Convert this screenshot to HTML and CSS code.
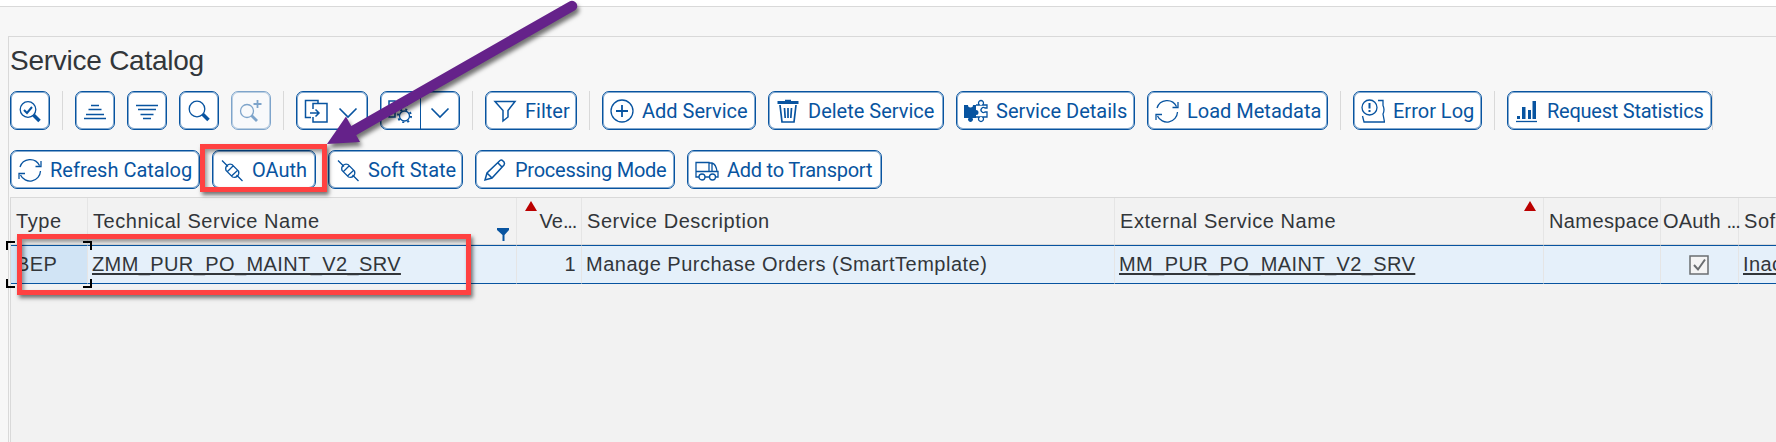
FILE: index.html
```html
<!DOCTYPE html>
<html lang="en">
<head>
<meta charset="utf-8">
<title>Service Catalog</title>
<link rel="stylesheet" href="styles.css">
</head>
<body>
<div class="topbar"></div>
<main class="panel">
  <h1 class="title"><span>Service Catalog</span></h1>
  <div class="toolbar">
    <button class="btn w40"><svg class="icon" viewBox="0 0 24 24"><circle cx="10" cy="10.500" r="7.800"/><path d="M6 11l3 3 5-6" stroke-width="2"/><path class="thick" d="M15.500 16l6 6"/></svg></button>
    <i class="sep"></i>
    <button class="btn w40"><svg class="icon" viewBox="0 0 24 24"><path d="M8 6.500h8M5.500 10.500h13M3 15.500h18M1 19.500h22"/></svg></button>
    <button class="btn w40"><svg class="icon" viewBox="0 0 24 24"><path d="M1 6.500h22M3 10.500h18M5.500 15.500h13M8 19.500h8"/></svg></button>
    <button class="btn w40"><svg class="icon" viewBox="0 0 24 24"><circle cx="10" cy="10" r="7.800"/><path class="thick" d="M15.500 15l6 6"/></svg></button>
    <button class="btn w40 off"><svg class="icon" viewBox="0 0 24 24"><circle cx="8" cy="12" r="6.500"/><path d="M12.500 16.500l5.500 5.500" stroke-width="2.800"/><path d="M18.500 1v8M14.500 5h8" stroke-width="1.800"/></svg></button>
    <i class="sep"></i>
    <button class="btn w72"><svg class="icon" viewBox="0 0 24 24"><path d="M7 18.500H1.500V1.500H14V4M9 10V4.500H23V23H9V18M6 14h9M11.500 10.500l3.500 3.500-3.500 3.500" stroke-width="1.500"/></svg><svg class="chev" viewBox="0 0 20 12"><path d="M1.500 1.500L10 10l8.500-8.500"/></svg></button>
    <div class="btn split"><span class="half"><svg class="icon" viewBox="0 0 24 24"><path d="M1 18V2h6v16zM10 7V2h9v5" stroke-width="1.500"/><circle cx="16.500" cy="17" r="5"/><circle cx="16.500" cy="17" r="6.500" stroke-width="2" stroke-dasharray="2 3.105"/></svg></span><span class="half last"><svg class="chev" viewBox="0 0 20 12"><path d="M1.500 1.500L10 10l8.500-8.500"/></svg></span></div>
    <i class="sep"></i>
    <button class="btn w92"><svg class="icon" viewBox="0 0 24 24"><path d="M2 2.500h20l-7 9v6.500l-5 4V11.500z" stroke-width="1.500"/></svg><span class="label">Filter</span></button>
    <i class="sep"></i>
    <button class="btn w154"><svg class="icon" viewBox="0 0 24 24"><circle cx="12" cy="12" r="11"/><path d="M12 6v12M6 12h12" stroke-width="1.800"/></svg><span class="label">Add Service</span></button>
    <button class="btn w176"><svg class="icon" viewBox="0 0 24 24"><path d="M1.500 3.500h21" stroke-width="3"/><path d="M9 1.500h6" stroke-width="1.500"/><path d="M4 6l2 17h12l2-17M8.500 9l.7 10M12 9v10M15.500 9l-.7 10" stroke-width="1.700"/></svg><span class="label">Delete Service</span></button>
    <button class="btn w179"><svg class="icon" viewBox="0 0 24 24"><path class="solid" d="M0 6h4a2.500 2.500 0 1 0 5 0h3v5a2.500 2.500 0 1 1 0 5v3H8.500a2.500 2.500 0 1 1-4 0H0z"/><path d="M12 6h3.500a2.500 2.500 0 1 1 3 0H23v3h-2a2.500 2.500 0 1 0 0 4h2v5h-4.500a2.500 2.500 0 1 1-3 0H12"/></svg><span class="label">Service Details</span></button>
    <button class="btn w181"><svg class="icon" viewBox="0 0 24 24"><path d="M2 9A10.500 10.500 0 0 1 21.500 7.500M23 3v5.500h-5.500M22.500 13A10.500 10.500 0 0 1 2.500 17M1 21v-5.500h6"/></svg><span class="label">Load Metadata</span></button>
    <i class="sep"></i>
    <button class="btn w129"><svg class="icon" viewBox="0 0 24 24"><circle cx="8.500" cy="8.500" r="7.500"/><path d="M8.500 4v5.500M8.500 11v2" stroke-width="2"/><path d="M17 1.500h5v5q2 4 0 8.500l1.500 8H3L1.500 17"/></svg><span class="label">Error Log</span></button>
    <i class="sep"></i>
    <button class="btn w205"><svg class="icon" viewBox="0 0 24 24"><path class="solid" d="M2 17h3v3H2zM7 8h3.500v12H7zM13 11h3v9h-3zM17.500 2H21v18h-3.500z"/><path d="M1 22.500h21"/></svg><span class="label narrow">Request Statistics</span></button>
    <i class="sep tail"></i>
  </div>
  <div class="toolbar second">
    <button class="btn w190"><svg class="icon" viewBox="0 0 24 24"><path d="M2 9A10.500 10.500 0 0 1 21.500 7.500M23 3v5.500h-5.500M22.500 13A10.500 10.500 0 0 1 2.500 17M1 21v-5.500h6"/></svg><span class="label">Refresh Catalog</span></button>
    <button class="btn w104"><svg class="icon" viewBox="0 0 24 24"><path d="M2 2.500l6 6M16.500 17l6 6"/><path d="M12 6.500q-3-1-5 1t-1 5l6.500 6.500q3 1 5-1t1-5zM7 14l6.500-6.500M11.500 18L18 12"/></svg><span class="label">OAuth</span></button>
    <button class="btn w135"><svg class="icon" viewBox="0 0 24 24"><path d="M2 2.500l6 6M16.500 17l6 6"/><path d="M12 6.500q-3-1-5 1t-1 5l6.500 6.500q3 1 5-1t1-5zM7 14l6.500-6.500M11.500 18L18 12"/></svg><span class="label">Soft State</span></button>
    <button class="btn w200"><svg class="icon" viewBox="0 0 24 24"><path d="M2 22l2-7L17 2.500q1.500-1 3 .5l1 1q1 1.500 0 3L9 20zM15 5l4.500 4.500M4 15l5 5" stroke-width="1.500"/></svg><span class="label narrow">Processing Mode</span></button>
    <button class="btn w195"><svg class="icon" viewBox="0 0 24 24"><path d="M4 19H1V4.500h13v9M1 13.500h22V19h-2M14 5h3q4 1 5 8.500M17 5v8M10 19h4"/><circle cx="7" cy="19" r="3"/><circle cx="17.500" cy="19" r="3"/></svg><span class="label narrow">Add to Transport</span></button>
  </div>
  <section class="grid">
    <div class="row head">
      <div class="cell c1"><span>Type</span></div>
      <div class="cell c2"><span>Technical Service Name</span><svg class="funnel" viewBox="0 0 12 13"><path d="M0 0h12v2L7.500 7v6h-2V7L0 2z"/></svg></div>
      <div class="cell c3"><span>Ve<span class="dots">...</span></span><i class="sort"></i></div>
      <div class="cell c4"><span>Service Description</span></div>
      <div class="cell c5"><span>External Service Name</span><i class="sort"></i></div>
      <div class="cell c6"><span>Namespace</span></div>
      <div class="cell c7"><span>OAuth <span class="dots">...</span></span></div>
      <div class="cell c8"><span>Soft State</span></div>
    </div>
    <div class="row data">
      <div class="cell c1"><span>BEP</span></div>
      <div class="cell c2"><span class="link">ZMM_PUR_PO_MAINT_V2_SRV</span></div>
      <div class="cell c3"><span>1</span></div>
      <div class="cell c4"><span>Manage Purchase Orders (SmartTemplate)</span></div>
      <div class="cell c5"><span class="link">MM_PUR_PO_MAINT_V2_SRV</span></div>
      <div class="cell c6"></div>
      <div class="cell c7"><svg class="check" viewBox="0 0 20 20"><rect x="1" y="1" width="18" height="18"/><path d="M5 10l4 4.500 7-10" stroke-width="2"/></svg></div>
      <div class="cell c8"><span class="link">Inactive</span></div>
    </div>
  </section>
</main>
<svg class="focus" viewBox="0 0 86 47"><path d="M1 9V1h8M77 1h8v8M85 38v8h-8M9 46H1v-8"/></svg>
<div class="mark mark-button"></div>
<div class="mark mark-row"></div>
<svg class="arrow" viewBox="0 0 290 160"><path class="shaft" d="M252 6L33 131"/><path class="tip" d="M7 144L26 116.500 40 142z"/></svg>
</body>
</html>
```
FILE: styles.css
```css
* { box-sizing: border-box; }
body { margin: 0; width: 1776px; height: 442px; overflow: hidden; background: #f7f7f7; font-family: "Liberation Sans", Arial, sans-serif; color: #32363a; }
.topbar { height: 7px; background: #fff; border-bottom: 1px solid #d9d9d9; }
.panel { margin: 29px 0 0 8px; height: 406px; border: solid #d9d9d9; border-width: 1px 0 0 1px; padding-left: 1px; }
.title { margin: 0; height: 54px; padding-top: 8px; font-size: 28px; line-height: 32px; font-weight: 400; letter-spacing: -.25px; }
.toolbar { display: flex; gap: 12px; height: 39px; }
.second { margin-top: 20px; }
.sep { flex: none; width: 1px; height: 39px; background: #d9d9d9; }
.tail { margin-left: -12px; }
.btn { flex: none; display: flex; align-items: center; height: 39px; padding: 0 0 0 7px; border: 1px solid #0854a0; border-radius: 7px; box-shadow: inset 0 0 0 1px #0854a080; background: #fff; color: #0854a0; font: 400 20px/38px Roboto, sans-serif; white-space: nowrap; }
.off { opacity: .5; background: #fafcff; }
.icon { flex: none; width: 24px; height: 24px; margin-right: 8px; }
.icon, .chev { fill: none; stroke: currentColor; stroke-width: 1.3; }
.icon .thick { stroke-width: 3.5; }
.icon .solid { fill: currentColor; stroke: none; }
.narrow { letter-spacing: -.25px; }
.chev { width: 20px; height: 12px; margin: 4px 0 0 2px; stroke-width: 1.6; }
.w40 { width: 40px; } .w72 { width: 72px; } .w92 { width: 92px; } .w154 { width: 154px; } .w176 { width: 176px; }
.w179 { width: 179px; } .w181 { width: 181px; } .w129 { width: 129px; } .w205 { width: 205px; }
.w190 { width: 190px; } .w104 { width: 104px; } .w135 { width: 135px; } .w200 { width: 200px; } .w195 { width: 195px; }
.split { width: 80px; padding: 0; }
.half { display: flex; align-items: center; width: 40px; height: 37px; padding-left: 7px; }
.last { border-left: 1px solid #0854a0; }
.grid { margin-top: 8px; height: 245px; border: solid #d9d9d9; border-width: 1px 0 0 1px; background: #f2f2f2; font-size: 20px; overflow: hidden; }
.row { display: flex; width: 1900px; white-space: nowrap; }
.head { height: 47px; line-height: 46px; border-bottom: 1px solid #d9d9d9; }
.data { height: 39px; line-height: 37px; }
.cell { position: relative; flex: none; border-right: 1px solid #e5e5e5; padding-left: 5px; letter-spacing: .55px; }
.data .cell { background: #e5f0fa; border-top: 1px solid #0854a0; border-bottom: 1px solid #0854a0; padding-left: 4px; letter-spacing: .4px; }
.data .c4 { letter-spacing: .5px; }
.data .c1 { background: #d1e4f5; padding-left: 5px; }
.c1 { width: 77px; } .c2 { width: 429px; } .c3 { width: 65px; text-align: right; padding-right: 5px; } .c4 { width: 533px; }
.c5 { width: 429px; } .c6 { width: 117px; } .c7 { width: 78px; padding-left: 2px; } .c8 { width: 120px; }
.head .c3 { letter-spacing: 0; }
.head .c6 { letter-spacing: .4px; }
.head .c7 { letter-spacing: .2px; }
.head .dots { letter-spacing: -1.2px; }
.data .c7 { display: flex; align-items: center; padding-left: 28px; }
.link { text-decoration: underline; text-decoration-thickness: 2px; text-underline-offset: 2px; text-decoration-skip-ink: none; }
.sort { position: absolute; top: 3px; right: 7px; border: 6px solid transparent; border-top: 0; border-bottom: 10px solid #b00; }
.c3 .sort { right: auto; left: 8px; }
.funnel { position: absolute; right: 7px; top: 30px; width: 12px; height: 13px; fill: #0854a0; }
.check { width: 20px; height: 20px; fill: #f4f4f4; stroke: #6a6d70; stroke-width: 1.5; }
.focus { position: absolute; left: 6px; top: 241px; width: 86px; height: 47px; fill: none; stroke: #000; stroke-width: 2; }
.mark { position: absolute; border: 5px solid #ff4141; box-shadow: 2px 3px 4px #0008, inset 2px 3px 4px #0006; }
.mark-button { left: 200px; top: 144px; width: 127px; height: 48px; }
.mark-row { left: 17px; top: 234px; width: 454px; height: 61px; }
.arrow { position: absolute; left: 320px; top: 0; width: 290px; height: 160px; filter: drop-shadow(2px 4px 2px #0008); }
.shaft { fill: none; stroke: #65228a; stroke-width: 10.5; stroke-linecap: round; }
.tip { fill: #65228a; }
```
